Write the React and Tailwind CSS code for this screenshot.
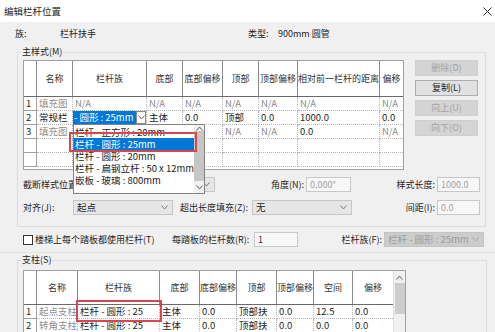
import React from 'react'

const G = 'text-[#8e8e8e]'
const B = 'text-[#1e1e1e]'

const mainCols = 'grid-cols-[13px_36px_74px_36px_40px_36px_39px_82px_23px]'
const postCols = 'grid-cols-[13px_41px_82px_40px_37px_40px_37px_39px_40px]'

function Chevron({ up = false, color = '#606060' }) {
  return (
    <svg width="7" height="5" viewBox="0 0 7 5">
      <path
        d={up ? 'M0.5 4.5 L3.5 1 L6.5 4.5' : 'M0.5 0.5 L3.5 4 L6.5 0.5'}
        fill="none"
        stroke={color}
        strokeWidth="1"
      />
    </svg>
  )
}

function HeadRow({ cols, heads, h }) {
  return (
    <div className={`grid ${cols} ${h} border-b border-[#6b6b6b]`}>
      {heads.map((t, i) => (
        <div
          key={i}
          className="flex items-center justify-center border-r border-[#8a8a8a] last:border-r-0 text-[9px] leading-[11px] text-[#333] whitespace-nowrap overflow-hidden"
        >
          {t}
        </div>
      ))}
    </div>
  )
}

function BodyRow({ cols, num, cells }) {
  return (
    <div className={`grid ${cols} h-[14px]`}>
      <div className="border-r border-b border-[#a0a0a0] text-[9.5px] leading-[13px] pl-[2px]">{num}</div>
      {cells.map((c, i) => (
        <div
          key={i}
          className={`border-r border-b border-dotted border-[#b4b4b4] last:border-r-0 text-[9.5px] leading-[13px] pl-[2px] whitespace-nowrap overflow-hidden ${c.tone || B}`}
        >
          {c.node || c.t}
        </div>
      ))}
    </div>
  )
}

function Button({ label, enabled }) {
  return (
    <div
      className={`h-[16px] flex items-center justify-center text-[9px] border ${
        enabled ? 'bg-[#e1e1e1] border-[#adadad] text-[#1e1e1e]' : 'bg-[#d4d4d4] border-[#cfcfcf] text-[#a3a3a3]'
      }`}
    >
      {label}
    </div>
  )
}

function Combo({ w, text, disabled }) {
  return (
    <div
      className={`${w} h-[15px] flex items-center justify-between border pl-[3px] pr-[4px] text-[9.5px] ${
        disabled ? 'bg-[#cccccc] border-[#c4c4c4] text-[#9c9c9c]' : 'bg-[#e6e6e6] border-[#c6c6c6] text-[#1e1e1e]'
      }`}
    >
      <span className="whitespace-nowrap overflow-hidden">{text}</span>
      <Chevron color={disabled ? '#a8a8a8' : '#7a7a7a'} />
    </div>
  )
}

function Input({ w, text, dark }) {
  return (
    <div
      className={`${w} h-[15px] flex items-center border border-[#c8c8c8] bg-[#f8f8f8] pl-[3px] text-[9px] ${
        dark ? 'text-[#333]' : 'text-[#a0a0a0]'
      }`}
    >
      {text}
    </div>
  )
}

export default function App() {
  const na = { t: 'N/A', tone: G }
  const mainRows = [
    { num: '1', cells: [{ t: '填充图', tone: G }, na, na, na, na, na, na, na] },
    {
      num: '2',
      cells: [
        { t: '常规栏' },
        {
          node: (
            <div className="flex h-[13px] -ml-[2px]">
              <div className="w-[63px] bg-[#0078d7] text-white pl-[1px] leading-[13px]">- 圆形 : 25mm</div>
              <div className="w-[10px] bg-white border border-[#8a8a8a] flex items-center justify-center">
                <Chevron />
              </div>
            </div>
          ),
        },
        { t: '主体' },
        { t: '0.0' },
        { t: '顶部' },
        { t: '0.0' },
        { t: '1000.0' },
        { t: '0.0' },
      ],
    },
    { num: '3', cells: [{ t: '填充图', tone: G }, { t: '' }, na, na, na, na, { t: '0.0' }, na] },
    { num: '', cells: Array(8).fill({ t: '' }) },
    { num: '', cells: Array(8).fill({ t: '' }) },
  ]

  const postRows = [
    {
      num: '1',
      cells: [
        { t: '起点支柱', tone: G },
        { t: '栏杆 - 圆形 : 25' },
        { t: '主体' },
        { t: '0.0' },
        { t: '顶部扶' },
        { t: '0.0' },
        { t: '12.5' },
        { t: '0.0' },
      ],
    },
    {
      num: '2',
      cells: [
        { t: '转角支柱', tone: G },
        { t: '栏杆 - 圆形 : 25' },
        { t: '主体' },
        { t: '0.0' },
        { t: '顶部扶' },
        { t: '0.0' },
        { t: '0.0' },
        { t: '0.0' },
      ],
    },
  ]

  const listItems = ['栏杆 - 正方形 : 20mm', '栏杆 - 圆形 : 25mm', '栏杆 - 圆形 : 20mm', '栏杆 - 扁钢立杆 : 50 x 12mm', '嵌板 - 玻璃 : 800mm']

  return (
    <div className="relative w-[495px] h-[332px] overflow-hidden bg-[#f0f0f0] text-[#1e1e1e] font-['Noto_Sans_CJK_SC','Noto_Sans',sans-serif]">
      {/* Title bar */}
      <div className="h-[22px] bg-white flex items-center justify-between pl-[4px] pr-[3px]">
        <span className="text-[9.5px]">编辑栏杆位置</span>
        <svg width="9" height="9" viewBox="0 0 9 9">
          <path d="M0.5 0.5 L8.5 8.5 M8.5 0.5 L0.5 8.5" stroke="#333" strokeWidth="1" />
        </svg>
      </div>

      {/* Family / type */}
      <div className="h-[24px] flex items-center text-[9px]">
        <span className="ml-[15px] w-[45px]">族:</span>
        <span className="w-[188px]">栏杆扶手</span>
        <span className="w-[30px]">类型:</span>
        <span>900mm 圆管</span>
      </div>

      {/* Main pattern */}
      <fieldset className="ml-[17px] w-[469px] border border-[#dcdcdc] pb-[11px]">
        <legend className="ml-[3px] px-[1px] text-[9px] leading-[12px]">主样式(M)</legend>
        <div className="flex pl-[5px] pt-[2px]">
          <div className="w-[381px] h-[110px] border border-[#a0a0a0] bg-white overflow-hidden">
            <HeadRow
              cols={mainCols}
              h="h-[36px]"
              heads={['', '名称', '栏杆族', '底部', '底部偏移', '顶部', '顶部偏移', '相对前一栏杆的距离', '偏移']}
            />
            {mainRows.map((r, i) => (
              <BodyRow key={i} cols={mainCols} num={r.num} cells={r.cells} />
            ))}
          </div>
          <div className="ml-[11px] w-[63px] flex flex-col gap-[4px]">
            <Button label="删除(D)" />
            <Button label="复制(L)" enabled />
            <Button label="向上(U)" />
            <Button label="向下(O)" />
          </div>
        </div>

        <div className="flex items-center pl-[5px] mt-[7px] text-[9px]">
          <span className="w-[50px] whitespace-nowrap">截断样式位置</span>
          <Combo w="w-[142px]" text="" />
          <span className="w-[91px] text-right pr-[2px]">角度(N):</span>
          <Input w="w-[45px]" text="0.000°" />
          <span className="w-[86px] text-right pr-[2px]">样式长度:</span>
          <Input w="w-[43px]" text="1000.0" />
        </div>
        <div className="flex items-center pl-[5px] mt-[8px] text-[9px]">
          <span className="w-[50px]">对齐(J):</span>
          <Combo w="w-[100px]" text="起点" />
          <span className="w-[79px] pl-[7px] whitespace-nowrap">超出长度填充(Z):</span>
          <Combo w="w-[100px]" text="无" />
          <span className="w-[85px] text-right pr-[2px]">间距(I):</span>
          <Input w="w-[43px]" text="0.0" />
        </div>
      </fieldset>

      {/* Per tread */}
      <div className="h-[26px] flex items-center text-[9px] border-b border-[#e2e2e2]">
        <div className="ml-[23px] w-[10px] h-[10px] border border-[#333] bg-white" />
        <span className="ml-[2px] w-[137px]">楼梯上每个踏板都使用栏杆(T)</span>
        <span className="w-[82px] whitespace-nowrap">每踏板的栏杆数(R):</span>
        <Input w="w-[44px]" text="1" dark />
        <span className="w-[86px] text-right pr-[2px]">栏杆族(F):</span>
        <Combo w="w-[100px]" text="栏杆 - 圆形 : 25mm" disabled />
      </div>

      {/* Posts */}
      <fieldset className="ml-[17px] mt-[1px] w-[470px] border border-[#dcdcdc] h-[90px]">
        <legend className="ml-[3px] px-[1px] text-[9px] leading-[12px]">支柱(S)</legend>
        <div className="flex pl-[5px] pt-[4px]">
          <div className="flex border border-[#a0a0a0] bg-white h-[70px] overflow-hidden">
            <div className="w-[369px]">
              <HeadRow
                cols={postCols}
                h="h-[34px]"
                heads={['', '名称', '栏杆族', '底部', '底部偏移', '顶部', '顶部偏移', '空间', '偏移']}
              />
              {postRows.map((r, i) => (
                <BodyRow key={i} cols={postCols} num={r.num} cells={r.cells} />
              ))}
            </div>
            <div className="w-[12px] bg-[#f0f0f0] border-l border-[#e0e0e0] flex flex-col items-center">
              <div className="h-[12px] flex items-center">
                <Chevron up />
              </div>
              <div className="w-[10px] h-[31px] bg-[#cdcdcd]" />
            </div>
          </div>
        </div>
      </fieldset>

      {/* Open dropdown list */}
      <div className="absolute left-[73px] top-[124px] w-[132px] h-[70px] bg-white border border-[#828282] flex">
        <div className="flex-1 pt-[1px]">
          {listItems.map((t, i) => (
            <div
              key={i}
              className={`h-[12px] leading-[12px] text-[9.5px] pl-[1px] whitespace-nowrap ${
                i === 1 ? 'bg-[#0078d7] text-white' : 'text-[#1e1e1e]'
              }`}
            >
              {t}
            </div>
          ))}
        </div>
        <div className="w-[12px] bg-[#f0f0f0] flex flex-col items-center">
          <div className="h-[6px] flex items-center">
            <Chevron up />
          </div>
          <div className="w-[10px] h-[50px] bg-[#c6c6c6]" />
          <div className="flex-1 flex items-center">
            <Chevron />
          </div>
        </div>
      </div>

      {/* Highlight boxes */}
      <div className="absolute left-[69px] top-[132px] w-[128px] h-[20px] border-2 border-[#d9464b]" />
      <div className="absolute left-[76px] top-[300px] w-[86px] h-[22px] border-2 border-[#d9464b]" />
    </div>
  )
}
